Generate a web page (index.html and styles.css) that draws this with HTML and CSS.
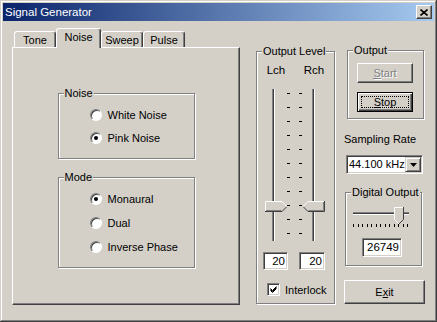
FILE: index.html
```html
<!DOCTYPE html>
<html lang="en">
<head>
  <meta charset="UTF-8">
  <title>Signal Generator</title>
  <link rel="stylesheet" href="styles.css">
</head>
<body>
  <div class="window">
    <div class="titlebar">
      <span class="title">Signal Generator</span>
      <button class="close" type="button" aria-label="Close">
        <svg width="8" height="7" viewBox="0 0 8 7"><path d="M0.5 0.5L7.5 6.5M7.5 0.5L0.5 6.5" stroke="#000" stroke-width="1.6" fill="none"/></svg>
      </button>
    </div>

    <div class="client">
      <!-- tab control -->
      <div class="tabctl">
        <div class="tabs">
          <div class="tab">Tone</div>
          <div class="tab active">Noise</div>
          <div class="tab">Sweep</div>
          <div class="tab">Pulse</div>
        </div>
        <div class="tab-panel">
          <div class="group">
            <div class="group-label">Noise</div>
            <div class="opts">
              <div class="opt"><span class="radio"></span>White Noise</div>
              <div class="opt"><span class="radio on"></span>Pink Noise</div>
            </div>
          </div>
          <div class="group mode">
            <div class="group-label">Mode</div>
            <div class="opts wide">
              <div class="opt"><span class="radio on"></span>Monaural</div>
              <div class="opt"><span class="radio"></span>Dual</div>
              <div class="opt"><span class="radio"></span>Inverse Phase</div>
            </div>
          </div>
        </div>
      </div>

      <!-- output level -->
      <div class="group level">
        <div class="group-label">Output Level</div>
        <div class="ch-labels">
          <span>Lch</span>
          <span></span>
          <span>Rch</span>
        </div>
        <svg class="vsliders" width="60" height="152" viewBox="0 0 60 152">
          <rect x="7" y="0" width="1" height="152" fill="#808080"/>
          <rect x="8" y="0" width="1" height="152" fill="#404040"/>
          <rect x="9" y="0" width="1" height="152" fill="#fff"/>
          <rect x="47" y="0" width="1" height="152" fill="#808080"/>
          <rect x="48" y="0" width="1" height="152" fill="#404040"/>
          <rect x="49" y="0" width="1" height="152" fill="#fff"/>
          <path stroke="#000" fill="none" d="M22 4.5h3M34 4.5h3M22 18.5h3M34 18.5h3M22 32.5h3M34 32.5h3M22 46.5h3M34 46.5h3M22 60.5h3M34 60.5h3M22 74.5h3M34 74.5h3M22 88.5h3M34 88.5h3M22 102.5h3M34 102.5h3M22 116.5h3M34 116.5h3M22 130.5h3M34 130.5h3M22 144.5h3M34 144.5h3"/>
          <!-- Lch thumb -->
          <polygon points="0,112 17,112 22,117.5 17,123 0,123" fill="#d4d0c8"/>
          <path d="M0.5 123V112.5H17L21.5 117" stroke="#fff" fill="none"/>
          <path d="M0 122.5H17L21.5 118" stroke="#404040" fill="none"/>
          <path d="M1 121.5H16.5" stroke="#808080" fill="none"/>
          <!-- Rch thumb -->
          <polygon points="60,112 43,112 38,117.5 43,123 60,123" fill="#d4d0c8"/>
          <path d="M59 112.5H43L38.5 117" stroke="#fff" fill="none"/>
          <path d="M59.5 112V122.5H43L38.5 118" stroke="#404040" fill="none"/>
          <path d="M58.5 113V121.5H43.5" stroke="#808080" fill="none"/>
        </svg>
        <div class="edits">
          <div class="edit lch">20</div>
          <div class="edit rch">20</div>
        </div>
        <div class="check-row">
          <span class="checkbox">
            <svg width="7" height="7" viewBox="0 0 7 7"><path d="M0.5 2.5L2.5 4.5L6.5 0.5M0.5 3.5L2.5 5.5L6.5 1.5M0.5 4.5L2.5 6.5L6.5 2.5" stroke="#000" fill="none"/></svg>
          </span>
          Interlock
        </div>
      </div>

      <!-- right column -->
      <div class="side">
        <div class="group out-group">
          <div class="group-label">Output</div>
          <div class="buttons">
            <button class="btn" type="button" disabled><u>S</u>tart</button>
            <button class="btn default" type="button"><span class="focus"><u>S</u>top</span></button>
          </div>
        </div>

        <div class="rate-label">Sampling Rate</div>
        <div class="combo">
          <span class="combo-text">44.100 kHz</span>
          <span class="combo-btn">
            <svg width="7" height="4" viewBox="0 0 7 4"><polygon points="0,0 7,0 3.5,4" fill="#000"/></svg>
          </span>
        </div>

        <div class="group dig-group">
          <div class="group-label">Digital Output</div>
          <svg class="hslider" width="60" height="26" viewBox="0 0 60 26">
            <rect x="2" y="8" width="56" height="1" fill="#808080"/>
            <rect x="2" y="9" width="56" height="1" fill="#404040"/>
            <rect x="2" y="10" width="56" height="1" fill="#fff"/>
            <polygon points="43,3 53,3 53,15 48,20 43,15" fill="#d4d0c8"/>
            <path d="M43.5 15.5V3.5H52.5" stroke="#fff" fill="none"/>
            <path d="M43.5 15.5L48 20" stroke="#fff" fill="none"/>
            <path d="M52.5 3V15.5L48 20" stroke="#404040" fill="none"/>
            <path stroke="#000" fill="none" d="M2.5 20v3M7.5 20v3M11.5 20v3M16.5 20v3M20.5 20v3M25.5 20v3M29.5 20v3M34.5 20v3M38.5 20v3M43.5 20v3M47.5 20v3M52.5 20v3M56.5 20v3"/>
          </svg>
          <div class="edit wide">26749</div>
        </div>

        <button class="btn exit" type="button">E<u>x</u>it</button>
      </div>
    </div>
  </div>
</body>
</html>
```

FILE: styles.css
```css
* {
  margin: 0;
  padding: 0;
  box-sizing: border-box;
}

body {
  font-family: 'Liberation Sans', Arial, sans-serif;
  font-size: 11px;
  color: #000;
  background: #d4d0c8;
}

/* Window frame */
.window {
  width: 437px;
  height: 322px;
  padding: 3px;
  background: #d4d0c8;
  box-shadow: inset -1px -1px #404040, inset 1px 1px #d4d0c8, inset -2px -2px #808080, inset 2px 2px #fff;
}

.titlebar {
  display: flex;
  align-items: center;
  justify-content: space-between;
  height: 18px;
  padding: 0 2px 0 2px;
  background: linear-gradient(90deg, #0a246a, #a6caf0);
  color: #fff;
  font-size: 11.5px;
}

.close {
  display: flex;
  align-items: center;
  justify-content: center;
  width: 16px;
  height: 14px;
  background: #d4d0c8;
  border: 1px solid;
  border-color: #fff #404040 #404040 #fff;
  box-shadow: inset -1px -1px #808080;
}

.client {
  display: flex;
  align-items: flex-start;
  padding: 7px 0 0 9px;
}

/* Tabs */
.tabctl {
  width: 228px;
}

.tabs {
  display: flex;
  align-items: flex-end;
  height: 19px;
  padding-left: 2px;
}

.tab {
  width: 42px;
  height: 16px;
  padding-top: 1px;
  line-height: 14px;
  text-align: center;
  border: 1px solid;
  border-bottom: none;
  border-color: #fff #404040 #fff #fff;
  border-radius: 3px 3px 0 0;
  box-shadow: inset -1px 0 #808080;
}

.tab.active {
  position: relative;
  z-index: 1;
  width: 45px;
  height: 20px;
  padding-top: 1px;
  margin-bottom: -1px;
  background: #d4d0c8;
}

.tab-panel {
  display: flex;
  flex-direction: column;
  align-items: center;
  height: 258px;
  padding-top: 45px;
  border: 1px solid;
  border-color: #fff #404040 #404040 #fff;
  box-shadow: inset -1px -1px #808080;
}

/* Group boxes */
.group {
  border: 1px solid #808080;
  box-shadow: inset 1px 1px #fff, 1px 1px #fff;
}

.group-label {
  display: table;
  margin: -8px 0 0 5px;
  padding: 0 1px;
  line-height: 14px;
  background: #d4d0c8;
}

.tab-panel .group {
  width: 137px;
}

.tab-panel .group.mode {
  margin-top: 18px;
}

.opts {
  display: flex;
  flex-direction: column;
  gap: 7px;
  padding: 7px 0 12px 31px;
}

.opts.wide {
  gap: 8px;
}

.opt {
  display: flex;
  align-items: center;
  gap: 6px;
  height: 16px;
}

.radio {
  width: 12px;
  height: 12px;
  border-radius: 50%;
  background: #fff;
  border: 1px solid;
  border-color: #808080 #fff #fff #808080;
  box-shadow: inset 1px 1px #404040;
}

.radio.on::after {
  content: '';
  display: block;
  width: 4px;
  height: 4px;
  margin: 3px;
  border-radius: 50%;
  background: #000;
}

/* Output level */
.level {
  width: 79px;
  margin: 23px 0 0 16px;
  padding-bottom: 7px;
}

.ch-labels {
  display: grid;
  grid-template-columns: 22px 16px 22px;
  margin-top: 6px;
  padding-left: 8px;
  line-height: 13px;
  font-size: 11.5px;
  text-align: center;
}

.vsliders {
  display: block;
  margin: 12px 0 0 8px;
}

.edits {
  display: flex;
  gap: 11px;
  margin-top: 11px;
  padding-left: 6px;
}

.edit {
  height: 18px;
  padding-right: 2px;
  line-height: 16px;
  text-align: right;
  background: #fff;
  border: 1px solid;
  border-color: #808080 #fff #fff #808080;
  box-shadow: inset 1px 1px #404040, inset -1px -1px #d4d0c8;
  font-size: 11.5px;
}

.edit.lch {
  width: 25px;
}

.edit.rch {
  width: 26px;
}

.edit.wide {
  width: 40px;
  height: 19px;
  margin: 8px 0 0 16px;
  line-height: 17px;
}

.check-row {
  display: flex;
  align-items: center;
  gap: 5px;
  height: 13px;
  margin-top: 13px;
  padding-left: 10px;
}

.checkbox {
  display: flex;
  align-items: center;
  justify-content: center;
  width: 13px;
  height: 13px;
  background: #fff;
  border: 1px solid;
  border-color: #808080 #fff #fff #808080;
  box-shadow: inset 1px 1px #404040, inset -1px -1px #d4d0c8;
}

/* Right column */
.side {
  display: flex;
  flex-direction: column;
  align-items: flex-start;
  width: 81px;
  margin: 22px 0 0 9px;
}

.out-group {
  width: 77px;
  margin-left: 3px;
}

.buttons {
  display: flex;
  flex-direction: column;
  gap: 9px;
  padding: 6px 0 6px 9px;
}

.btn {
  display: flex;
  align-items: center;
  justify-content: center;
  width: 56px;
  height: 20px;
  font: inherit;
  color: inherit;
  background: #d4d0c8;
  border: 1px solid;
  border-color: #fff #404040 #404040 #fff;
  box-shadow: inset -1px -1px #808080;
}

.btn:disabled {
  color: #808080;
  text-shadow: 1px 1px #fff;
}

.btn.default {
  padding: 3px;
  border-color: #000;
  box-shadow: inset 1px 1px #fff, inset -1px -1px #404040, inset -2px -2px #808080;
}

.btn .focus {
  display: flex;
  align-items: center;
  justify-content: center;
  align-self: stretch;
  flex: 1;
  border: 1px dotted #000;
}

.rate-label {
  margin-top: 14px;
  line-height: 13px;
}

.combo {
  display: flex;
  width: 77px;
  height: 19px;
  margin: 9px 0 0 2px;
  background: #fff;
  border: 1px solid;
  border-color: #808080 #fff #fff #808080;
  box-shadow: inset 1px 1px #404040, inset -1px -1px #d4d0c8;
  padding: 1px;
}

.combo-text {
  flex: 1;
  padding-left: 1px;
  line-height: 15px;
}

.combo-btn {
  display: flex;
  align-items: center;
  justify-content: center;
  width: 16px;
  height: 15px;
  background: #d4d0c8;
  border: 1px solid;
  border-color: #d4d0c8 #404040 #404040 #d4d0c8;
  box-shadow: inset 1px 1px #fff, inset -1px -1px #808080;
}

.dig-group {
  width: 77px;
  margin: 18px 0 0 1px;
  padding-bottom: 8px;
}

.hslider {
  display: block;
  margin: 5px 0 0 5px;
}

.btn.exit {
  width: 81px;
  height: 24px;
  margin-top: 14px;
}
```
